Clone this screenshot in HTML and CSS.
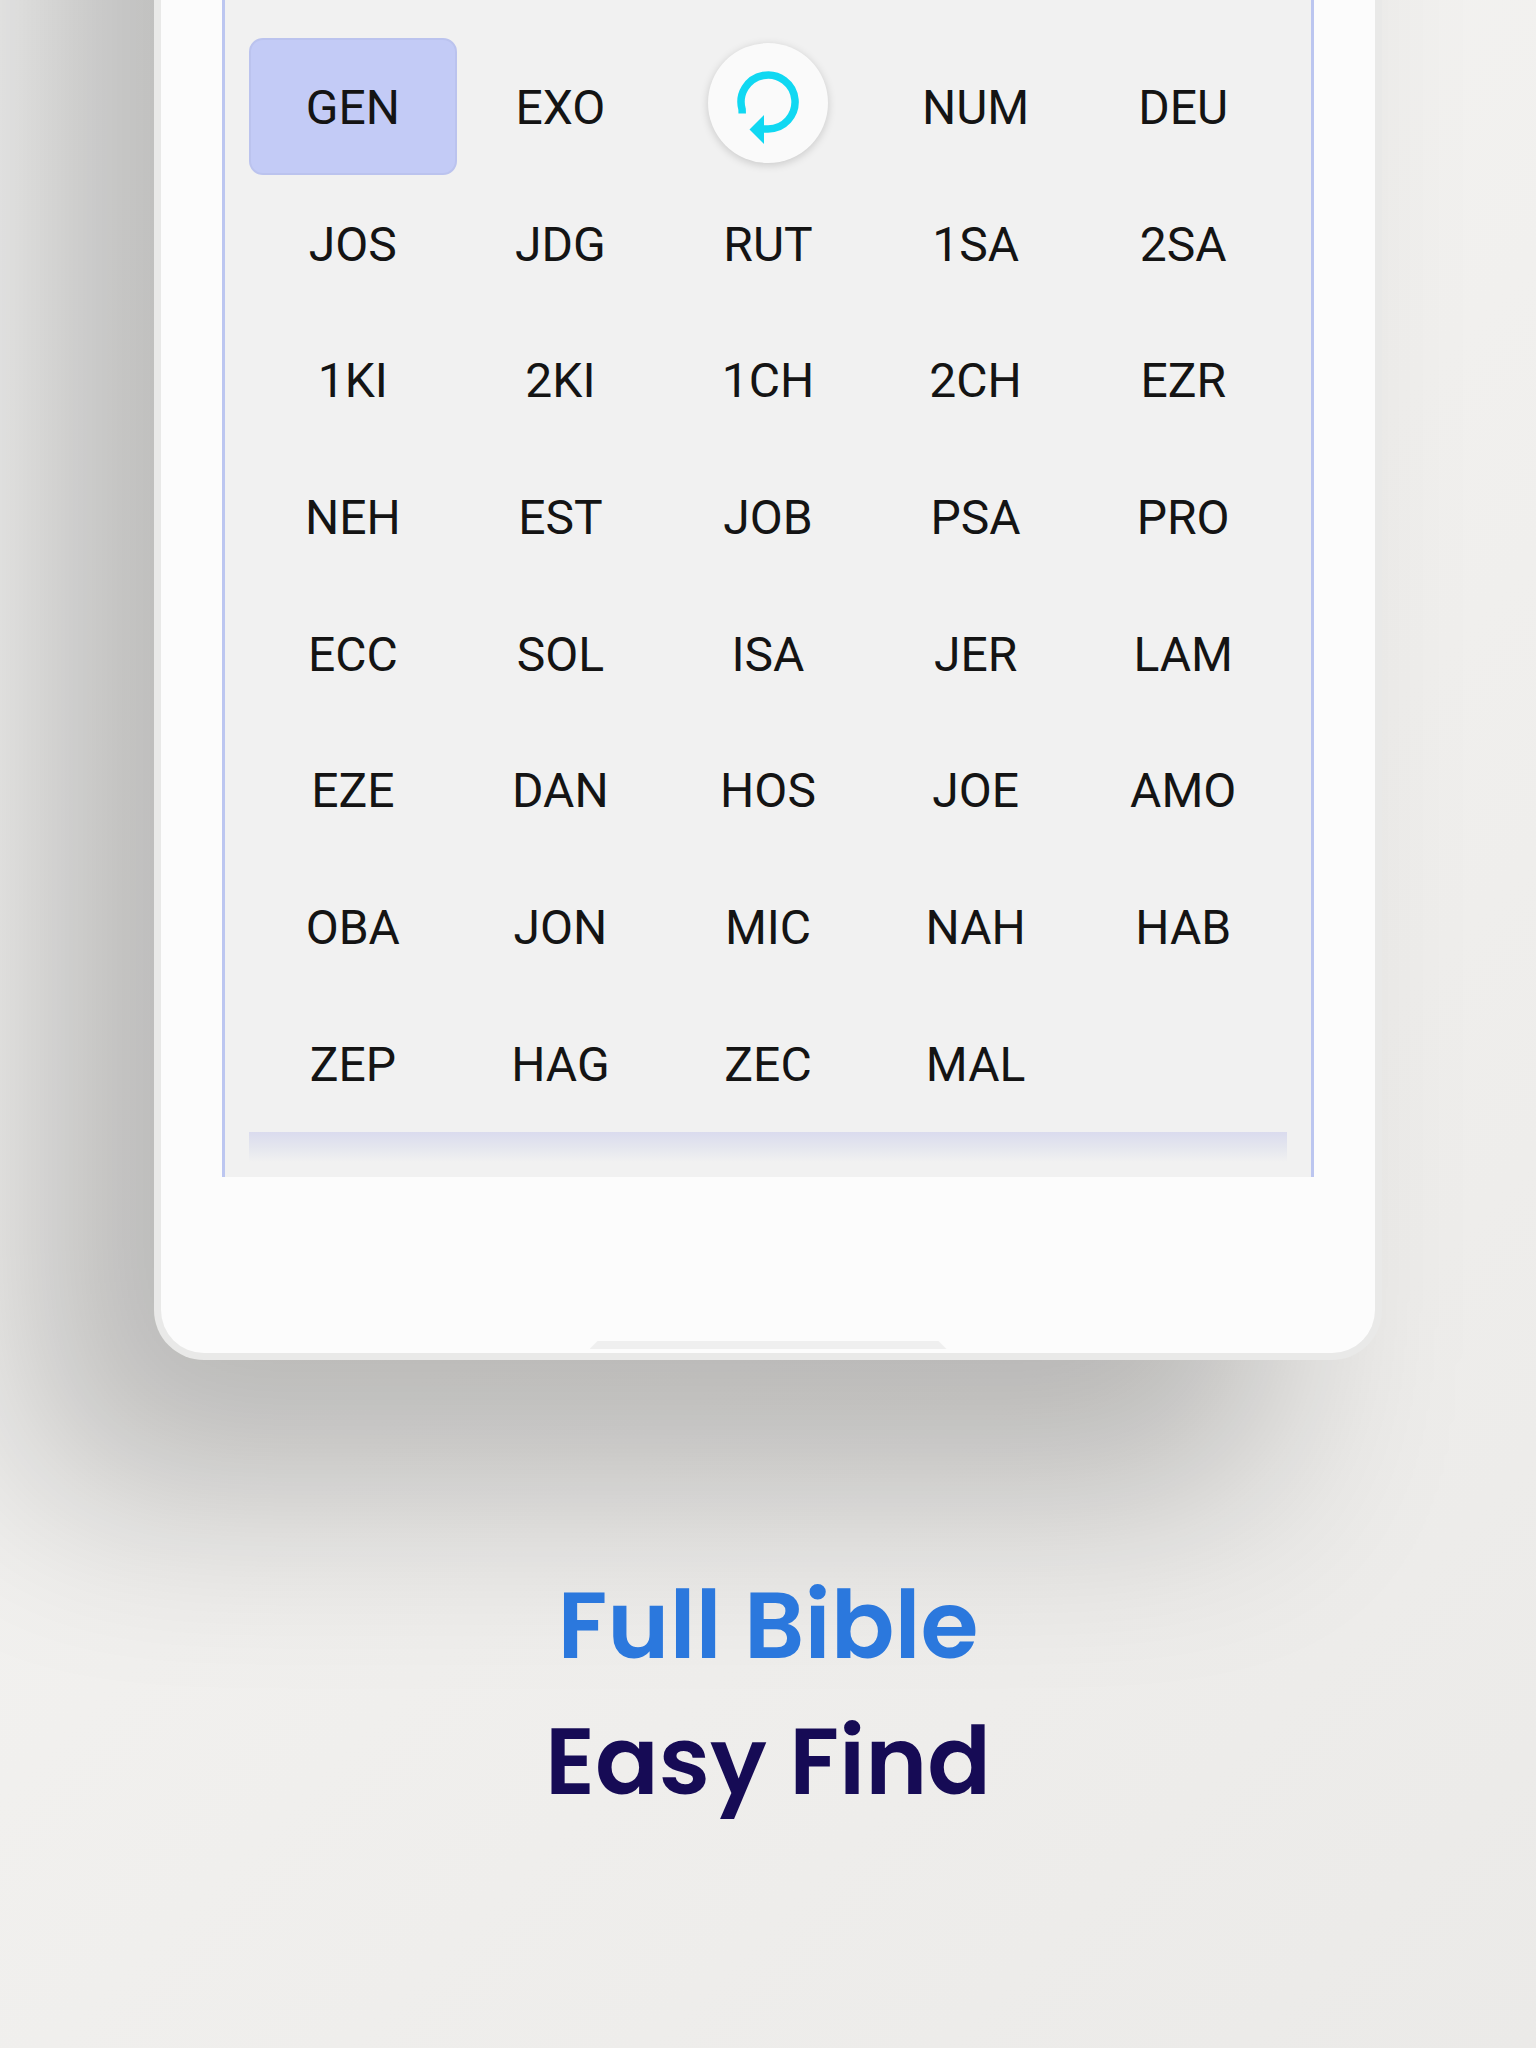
FILE: index.html
```html
<!DOCTYPE html>
<html lang="en">
<head>
  <meta charset="utf-8">
  <meta name="viewport" content="width=device-width, initial-scale=1.0">
  <title>Full Bible - Easy Find</title>
  <link rel="stylesheet" href="styles.css">
</head>
<body>
  <div class="device">
    <div class="screen">
      <div class="books">
        <div class="book selected">GEN</div>
        <div class="book">EXO</div>
        <div class="book">
          <!-- Refresh spinner covers this book -->
          <div class="refresh">
            <svg viewBox="0 0 120 120" width="120" height="120">
              <path d="M34.2 70.5 L34.1 66.4 A27 27 0 1 1 60 86 H55" fill="none" stroke="#10d8f2" stroke-width="7.5"/>
              <path d="M41.5 86.5 L56 72 V101 Z" fill="#10d8f2"/>
            </svg>
          </div>
        </div>
        <div class="book">NUM</div>
        <div class="book">DEU</div>
        <div class="book">JOS</div>
        <div class="book">JDG</div>
        <div class="book">RUT</div>
        <div class="book">1SA</div>
        <div class="book">2SA</div>
        <div class="book">1KI</div>
        <div class="book">2KI</div>
        <div class="book">1CH</div>
        <div class="book">2CH</div>
        <div class="book">EZR</div>
        <div class="book">NEH</div>
        <div class="book">EST</div>
        <div class="book">JOB</div>
        <div class="book">PSA</div>
        <div class="book">PRO</div>
        <div class="book">ECC</div>
        <div class="book">SOL</div>
        <div class="book">ISA</div>
        <div class="book">JER</div>
        <div class="book">LAM</div>
        <div class="book">EZE</div>
        <div class="book">DAN</div>
        <div class="book">HOS</div>
        <div class="book">JOE</div>
        <div class="book">AMO</div>
        <div class="book">OBA</div>
        <div class="book">JON</div>
        <div class="book">MIC</div>
        <div class="book">NAH</div>
        <div class="book">HAB</div>
        <div class="book">ZEP</div>
        <div class="book">HAG</div>
        <div class="book">ZEC</div>
        <div class="book">MAL</div>
      </div>
      <div class="divider"></div>
    </div>
    <div class="notch"></div>
  </div>
  <div class="caption">
    <h1>Full Bible</h1>
    <h2>Easy Find</h2>
  </div>
</body>
</html>
```
FILE: styles.css
```css
* {
  box-sizing: border-box;
  margin: 0;
  padding: 0;
}
html {
  overflow: hidden;
}
body {
  display: flow-root;
  width: 1536px;
  height: 2048px;
  overflow: hidden;
  background: linear-gradient(135deg, #f6f6f5 0%, #f1f0ee 50%, #ebeae8 100%);
}
/* The top of the device runs off the page */
.device {
  width: 1228px;
  height: 1760px;
  margin-top: -400px;
  margin-left: 154px;
  padding-top: 400px;
  display: flex;
  flex-direction: column;
  align-items: center;
  background: #fcfcfc;
  border: 7px solid #e9e9e8;
  border-top: none;
  border-radius: 0 0 50px 50px;
  box-shadow: -120px 128px 200px rgba(0, 0, 0, 0.24);
}
.screen {
  width: 1092px;
  height: 1177px;
  padding: 38px 24px 0;
  background: #f1f1f1;
  border: solid #bcc6f0;
  border-width: 0 3px;
}
.books {
  display: grid;
  grid-template-columns: repeat(5, 1fr);
  grid-auto-rows: 136.7px;
}
.book {
  display: flex;
  align-items: center;
  justify-content: center;
  padding-top: 2px;
  font-family: Roboto, sans-serif;
  font-size: 48px;
  color: #141414;
}
.selected {
  background: #c3cbf6;
  border: 2px solid #bbc3ee;
  border-radius: 14px;
}
.refresh {
  width: 120px;
  height: 120px;
  margin-bottom: 9px;
  border-radius: 50%;
  background: #fafafa;
  box-shadow: 0 2px 9px rgba(0, 0, 0, 0.17);
}
.refresh svg {
  display: block;
}
.divider {
  height: 30px;
  background: linear-gradient(#dadbee, #e4e6ee 50%, #f1f1f1);
}
.notch {
  width: 357px;
  height: 8px;
  margin-top: 164px;
  background: #efefef;
  clip-path: polygon(8px 0, 349px 0, 100% 100%, 0 100%);
}
.caption {
  position: relative;
  margin-top: 197px;
  text-align: center;
}
h1, h2 {
  font-family: Poppins, Inter, sans-serif;
  font-size: 94px;
  font-weight: 600;
  line-height: 136px;
}
h1 {
  color: #2b78dd;
}
h2 {
  color: #160b55;
}
```
